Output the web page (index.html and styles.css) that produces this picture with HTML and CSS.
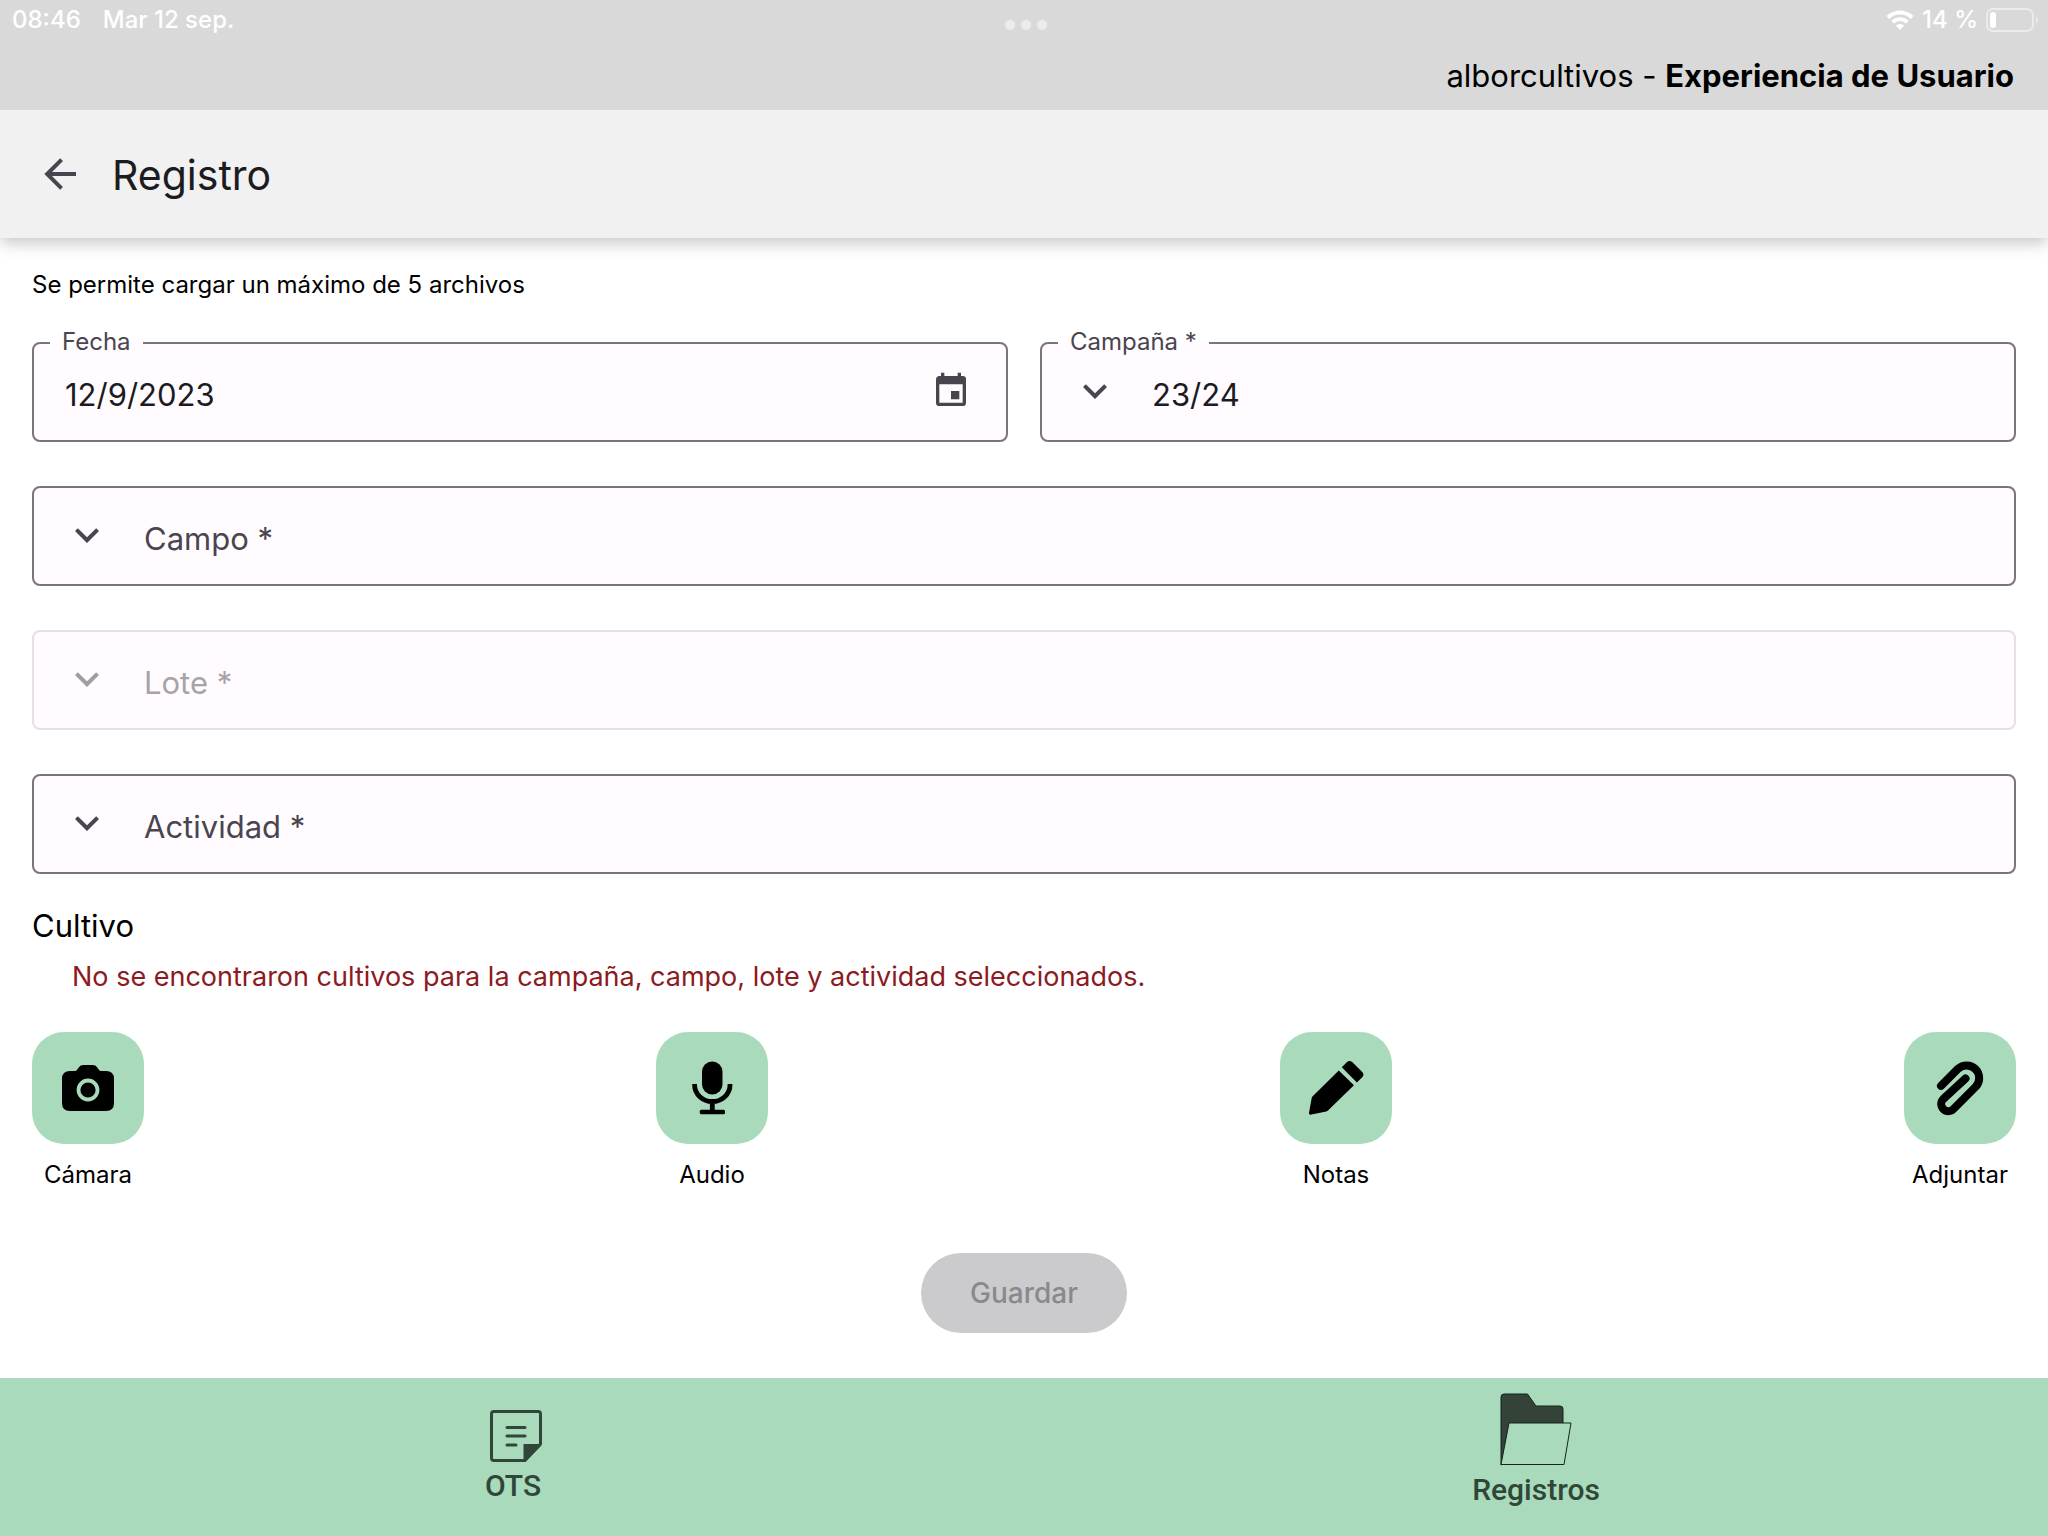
FILE: index.html
```html
<!DOCTYPE html>
<html lang="es">
<head>
<meta charset="utf-8">
<meta name="viewport" content="width=device-width, initial-scale=1">
<title>Registro</title>
<link rel="stylesheet" href="styles.css">
</head>
<body>
<div class="top">
  <div class="status">
    <div class="status-group status-left"><span>08:46</span><span>Mar 12 sep.</span></div>
    <div class="dots"><i></i><i></i><i></i></div>
    <div class="status-group status-right">
      <svg class="wifi" viewBox="0 0 28 20" aria-hidden="true"><path d="M2 7.500A17 17 0 0 1 26 7.500" fill="none" stroke="#fff" stroke-width="4"/><path d="M6.600 12.200A10.500 10.500 0 0 1 21.400 12.200" fill="none" stroke="#fff" stroke-width="3.600"/><path d="M14 20l-4.200-4.400a6 6 0 0 1 8.400 0z" fill="#fff"/></svg>
      <span>14 %</span>
      <svg class="battery" viewBox="0 0 54 24" aria-hidden="true"><rect x="1" y="1" width="46" height="22" rx="6" fill="none" stroke="#ebebeb" stroke-width="2"/><rect x="4" y="4" width="6" height="16" rx="3" fill="#fff"/><path d="M50 8q4 4 0 8z" fill="#ebebeb"/></svg>
    </div>
  </div>
  <p class="account">alborcultivos - <strong>Experiencia de Usuario</strong></p>
</div>

<header class="appbar">
  <button class="back" type="button" aria-label="Volver"><svg viewBox="0 0 24 24"><path d="M20 11v2H8l5.500 5.500-1.420 1.420L4.160 12l7.920-7.920L13.500 5.500 8 11z"/></svg></button>
  <h1>Registro</h1>
</header>

<main>
  <form class="form">
    <p class="hint">Se permite cargar un máximo de 5 archivos</p>

    <div class="fields">
      <div class="row">
        <div class="field">
          <label class="notch" for="fecha">Fecha</label>
          <input id="fecha" type="text" value="12/9/2023">
          <button class="calendar" type="button" aria-label="Elegir fecha"><svg viewBox="0 0 24 24"><path d="M19 19H5V8h14m-3-7v2H8V1H6v2H5c-1.110 0-2 .89-2 2v14a2 2 0 0 0 2 2h14a2 2 0 0 0 2-2V5a2 2 0 0 0-2-2h-1V1m-1 11h-5v5h5z"/></svg></button>
        </div>
        <div class="field">
          <label class="notch" for="campana">Campaña *</label>
          <svg class="chevron" viewBox="0 0 24 24" aria-hidden="true"><path d="M7.410 8.580L12 13.170l4.590-4.590L18 10l-6 6-6-6z"/></svg>
          <select id="campana"><option>23/24</option></select>
        </div>
      </div>
      <div class="field empty">
        <svg class="chevron" viewBox="0 0 24 24" aria-hidden="true"><path d="M7.410 8.580L12 13.170l4.590-4.590L18 10l-6 6-6-6z"/></svg>
        <select aria-label="Campo"><option>Campo *</option></select>
      </div>
      <div class="field disabled">
        <svg class="chevron" viewBox="0 0 24 24" aria-hidden="true"><path d="M7.410 8.580L12 13.170l4.590-4.590L18 10l-6 6-6-6z"/></svg>
        <select aria-label="Lote" disabled><option>Lote *</option></select>
      </div>
      <div class="field empty">
        <svg class="chevron" viewBox="0 0 24 24" aria-hidden="true"><path d="M7.410 8.580L12 13.170l4.590-4.590L18 10l-6 6-6-6z"/></svg>
        <select aria-label="Actividad"><option>Actividad *</option></select>
      </div>
    </div>

    <h2>Cultivo</h2>
    <p class="error">No se encontraron cultivos para la campaña, campo, lote y actividad seleccionados.</p>

    <div class="actions">
      <div class="action">
        <button type="button" id="camara" aria-labelledby="camara-l"><svg viewBox="0 0 112 112"><path d="M38 39h5c1.500 0 2-1 3-2.500C47.500 34 49 33 51.500 33h9c2.500 0 4 1 5.500 3.500 1 1.500 1.500 2.500 3 2.500h5q8 0 8 8v24q0 8-8 8H38q-8 0-8-8V47q0-8 8-8z"/><circle cx="56" cy="58" r="9.500" fill="none" stroke="#a9dabb" stroke-width="3.800"/></svg></button>
        <label id="camara-l" for="camara">Cámara</label>
      </div>
      <div class="action">
        <button type="button" id="audio" aria-labelledby="audio-l"><svg viewBox="0 0 112 112"><rect x="46" y="29.500" width="20.500" height="33" rx="10.200"/><path d="M38.600 52v1a17.700 16.500 0 0 0 35.400 0v-1M56.300 69v10" fill="none" stroke="#000" stroke-width="4.800"/><rect x="43.800" y="77.700" width="25.200" height="4.500" rx="1.500"/></svg></button>
        <label id="audio-l" for="audio">Audio</label>
      </div>
      <div class="action">
        <button type="button" id="notas" aria-labelledby="notas-l"><svg viewBox="0 0 112 112"><path d="M58.800 38.600L73.900 53.300 48 78.500q-.7.700-1.700 1L31.500 82.600q-3 .5-2.400-2.400L31.700 66q.2-1 1-1.800zM61.800 35.300l5.200-5.200q2.600-2.200 5.200 0l10.300 10.200q2 2.700-.2 5L76.900 50.500z"/></svg></button>
        <label id="notas-l" for="notas">Notas</label>
      </div>
      <div class="action">
        <button type="button" id="adjuntar" aria-labelledby="adjuntar-l"><svg viewBox="0 0 112 112"><path d="M37 53.800L54.100 36.700A12.600 12.600 0 0 1 71.900 54.500L49.500 77A7 7 0 0 1 39.300 67L61.500 46.500" fill="none" stroke="#000" stroke-width="8" stroke-linecap="round" stroke-linejoin="round"/></svg></button>
        <label id="adjuntar-l" for="adjuntar">Adjuntar</label>
      </div>
    </div>

    <button class="save" type="submit" disabled>Guardar</button>
  </form>
</main>

<nav class="tabs">
  <a class="tab-ots" href="#ots"><svg class="note" viewBox="0 0 52 52" aria-hidden="true"><path d="M4 1.500h44q2.500 0 2.500 2.500v30L35 50.500H4Q1.500 50.500 1.500 48V4Q1.500 1.500 4 1.500z" fill="none" stroke="#304638" stroke-width="3"/><path d="M33.500 34H51v2L36 51h-2.500z" fill="#304638"/><path d="M17 17.500h18M17 26h18M17 35h9" stroke="#304638" stroke-width="3" stroke-linecap="round"/></svg><span>OTS</span></a>
  <a class="tab-registros" href="#registros"><svg class="folder" viewBox="0 0 72 73" aria-hidden="true"><path d="M1 72V4Q1 1 4 1h23.500l8.500 12h24q3 0 3 3v14z" fill="#354239" stroke="#10261a"/><path d="M9 30h62l-7 41.500H1z" fill="#a9dabb" stroke="#10261a"/></svg><span>Registros</span></a>
</nav>
</body>
</html>
```
FILE: styles.css
```css
* { box-sizing: border-box; }
body {
  margin: 0;
  min-height: 100vh;
  display: flex;
  flex-direction: column;
  background: #fff;
  color: #000;
  font-family: Inter, "Liberation Sans", sans-serif;
}
h1, h2, p { margin: 0; font-weight: 400; }
button, input, select { font: inherit; color: inherit; border: 0; background: none; padding: 0; margin: 0; }
svg { display: block; }

.top { position: relative; z-index: 1; height: 110px; background: #d9d9d9; }
.status {
  display: grid;
  grid-template-columns: 1fr auto 1fr;
  height: 40px;
  padding: 0 8px 0 12px;
  color: #fff;
  font-size: 24px;
  font-weight: 500;
  line-height: 40px;
}
.status-group { display: flex; align-items: center; }
.status-left { gap: 22px; }
.status-right { justify-content: flex-end; gap: 8px; }
.dots { display: flex; gap: 6px; padding-top: 20px; }
.dots i { width: 10px; height: 10px; border-radius: 50%; background: #ececec; }
.wifi { width: 28px; height: 20px; }
.battery { width: 54px; height: 24px; }
.account { padding-right: 34px; text-align: right; font-size: 31px; line-height: 72px; }
.account strong { font-weight: 700; }

.appbar {
  height: 128px;
  display: flex;
  align-items: center;
  gap: 28px;
  padding: 0 36px;
  background: #f1f1f1;
  color: #1c1b1f;
  box-shadow: 0 4px 16px rgba(0, 0, 0, .25);
}
.appbar h1 { font-size: 41px; line-height: 56px; padding-top: 2px; }
.back svg { width: 48px; height: 48px; fill: #49454f; }

.form { display: flex; flex-direction: column; padding: 31px 32px 42px; }
.hint { font-size: 24px; line-height: 32px; }
.fields { display: flex; flex-direction: column; gap: 44px; margin-top: 41px; }
.row { display: grid; grid-template-columns: 1fr 1fr; gap: 32px; }
.field {
  position: relative;
  display: flex;
  align-items: center;
  height: 100px;
  border: 2px solid #79747e;
  border-radius: 8px;
  background: #fffbff;
  color: #1c1b1f;
  font-size: 31px;
}
.field input, .field select {
  flex: 1;
  min-width: 0;
  height: 96px;
  padding-top: 4px;
  appearance: none;
  opacity: 1;
}
.field input { padding-left: 31px; }
.field select { padding-left: 33px; }
.field.empty { color: #49454f; }
.field.disabled { border-color: #e6dfe6; color: #a7a3a9; }
.chevron { width: 48px; height: 48px; margin: 0 0 2px 29px; fill: #49454f; }
.disabled .chevron { fill: #a19da4; }
.calendar { margin: 0 35px 2px 0; }
.calendar svg { width: 40px; height: 40px; fill: #49454f; }
.notch {
  position: absolute;
  top: -18px;
  left: 16px;
  padding: 0 12px;
  background: linear-gradient(#fff 50%, #fffbff 50%);
  color: #49454f;
  font-size: 24px;
  line-height: 32px;
}

h2 { margin-top: 32px; font-size: 31px; line-height: 40px; }
.error { margin-top: 15px; padding-left: 40px; color: #8b1a22; font-size: 27px; line-height: 32px; }

.actions { display: flex; justify-content: space-between; margin-top: 39px; }
.action { display: flex; flex-direction: column; align-items: center; width: 112px; gap: 15px; font-size: 24px; line-height: 32px; }
.action button { width: 112px; height: 112px; border-radius: 32px; background: #a9dabb; }

.save {
  align-self: center;
  height: 80px;
  margin-top: 62px;
  padding: 0 49px;
  border-radius: 40px;
  background: #cbcbcd;
  color: #89898b;
  font-size: 28px;
  font-weight: 500;
}

.tabs { display: grid; grid-template-columns: 1fr 1fr; height: 158px; margin-top: auto; background: #a9dabb; }
.tabs a {
  display: flex;
  flex-direction: column;
  align-items: center;
  justify-content: center;
  gap: 8px;
  color: #304638;
  font: 500 30px/32px Roboto, sans-serif;
  text-decoration: none;
}
.tab-ots { padding-left: 2px; padding-bottom: 2px; }
.tab-registros { padding-bottom: 16px; }
.note { width: 52px; height: 52px; margin-left: 5px; }
.folder { width: 72px; height: 73px; }
```
